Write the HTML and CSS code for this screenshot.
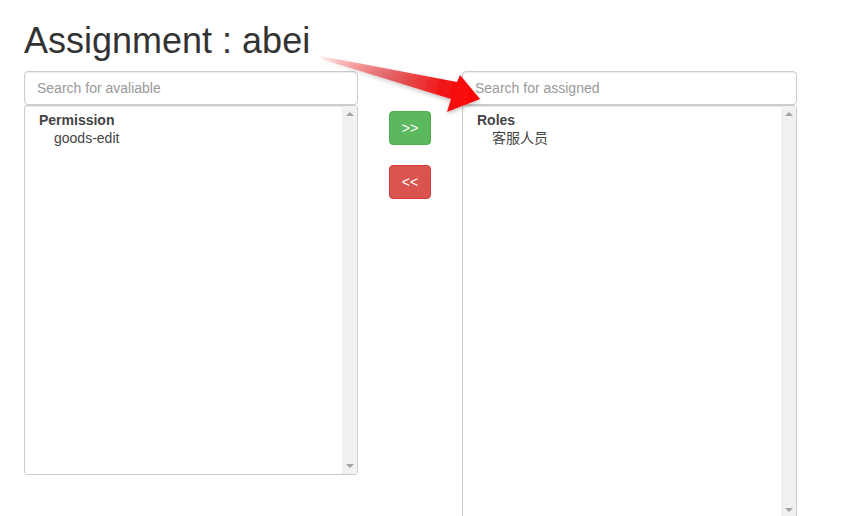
FILE: index.html
```html
<!DOCTYPE html>
<html>
<head>
<meta charset="utf-8">
<link rel="stylesheet" href="styles.css">
</head>
<body>
<div class="page">
  <h1 class="title">Assignment : abei</h1>
  <div class="row">
    <div class="col">
      <input class="search" type="text" placeholder="Search for avaliable">
      <div class="listbox list-left">
        <div class="items">
          <div class="group">Permission</div>
          <div class="option">goods-edit</div>
        </div>
        <div class="scrollbar">
          <span class="arrow-up"></span>
          <span class="arrow-down"></span>
        </div>
      </div>
    </div>
    <div class="mid">
      <button class="btn btn-add">&gt;&gt;</button>
      <button class="btn btn-remove">&lt;&lt;</button>
    </div>
    <div class="col col-right">
      <input class="search" type="text" placeholder="Search for assigned">
      <div class="listbox list-right">
        <div class="items">
          <div class="group">Roles</div>
          <div class="option">客服人员</div>
        </div>
        <div class="scrollbar">
          <span class="arrow-up"></span>
          <span class="arrow-down"></span>
        </div>
      </div>
    </div>
  </div>
</div>
<svg class="annot" width="850" height="516" viewBox="0 0 850 516">
  <defs>
    <linearGradient id="ag" x1="321" y1="57" x2="480" y2="99" gradientUnits="userSpaceOnUse">
      <stop offset="0" stop-color="#ff0000" stop-opacity="0.05"/>
      <stop offset="0.4" stop-color="#e03a3e" stop-opacity="0.7"/>
      <stop offset="0.75" stop-color="#f01818"/>
      <stop offset="1" stop-color="#ff0000"/>
    </linearGradient>
    <filter id="sh" x="-10%" y="-30%" width="130%" height="160%">
      <feGaussianBlur in="SourceAlpha" stdDeviation="2"/>
      <feOffset dx="0" dy="2" result="b"/>
      <feComponentTransfer><feFuncA type="linear" slope="0.25"/></feComponentTransfer>
      <feMerge><feMergeNode/><feMergeNode in="SourceGraphic"/></feMerge>
    </filter>
  </defs>
  <polygon filter="url(#sh)" fill="url(#ag)" points="321,56 457,82 460,75 480,99 447,112 451,99 321,59"/>
</svg>
</body>
</html>
```

FILE: styles.css
```css
html, body {
  margin: 0;
  padding: 0;
  overflow: hidden;
  background: #fff;
}
body {
  font-family: "Liberation Sans", Arial, "Noto Sans CJK SC", sans-serif;
  font-size: 14px;
  color: #333;
}
.page {
  padding: 21px 0 0 24px;
}
.title {
  margin: 0 0 10px 0;
  font-size: 36px;
  font-weight: 500;
  line-height: 1.1;
  color: #333;
}
.row {
  display: flex;
  align-items: flex-start;
}
.col {
  width: 334px;
  display: flex;
  flex-direction: column;
}
.col-right {
  width: 335px;
}
.search {
  box-sizing: border-box;
  height: 34px;
  width: 100%;
  margin: 0;
  padding: 6px 12px;
  font-family: inherit;
  font-size: 14px;
  color: #555;
  border: 1px solid #ccc;
  border-radius: 4px;
  box-shadow: inset 0 1px 1px rgba(0,0,0,.075);
  outline: none;
}
.search::placeholder {
  color: #999;
}
.listbox {
  box-sizing: border-box;
  display: flex;
  border: 1px solid #ccc;
  border-radius: 3px;
  box-shadow: inset 0 1px 1px rgba(0,0,0,.1);
  background: #fff;
}
.list-left { height: 370px; }
.list-right { height: 414px; }
.items {
  flex: 1;
  padding: 5px 0 0 14px;
  line-height: 18px;
  color: #444;
}
.group {
  font-weight: bold;
}
.option {
  padding-left: 15px;
}
.scrollbar {
  width: 15px;
  background: #f1f1f1;
  position: relative;
}
.arrow-up, .arrow-down {
  position: absolute;
  left: 4px;
  width: 0;
  height: 0;
  border-left: 4px solid transparent;
  border-right: 4px solid transparent;
}
.arrow-up {
  top: 6px;
  border-bottom: 4px solid #a3a3a3;
}
.arrow-down {
  bottom: 6px;
  border-top: 4px solid #a3a3a3;
}
.mid {
  width: 104px;
  display: flex;
  flex-direction: column;
  align-items: center;
  gap: 20px;
  padding-top: 40px;
}
.btn {
  box-sizing: border-box;
  width: 42px;
  height: 34px;
  padding: 0;
  font-family: inherit;
  font-size: 14px;
  color: #fff;
  border: 1px solid;
  border-radius: 4px;
  cursor: pointer;
}
.btn-add {
  background: #5cb85c;
  border-color: #4cae4c;
}
.btn-remove {
  background: #d9534f;
  border-color: #d43f3a;
}
.annot {
  position: absolute;
  left: 0;
  top: 0;
  pointer-events: none;
}
```
